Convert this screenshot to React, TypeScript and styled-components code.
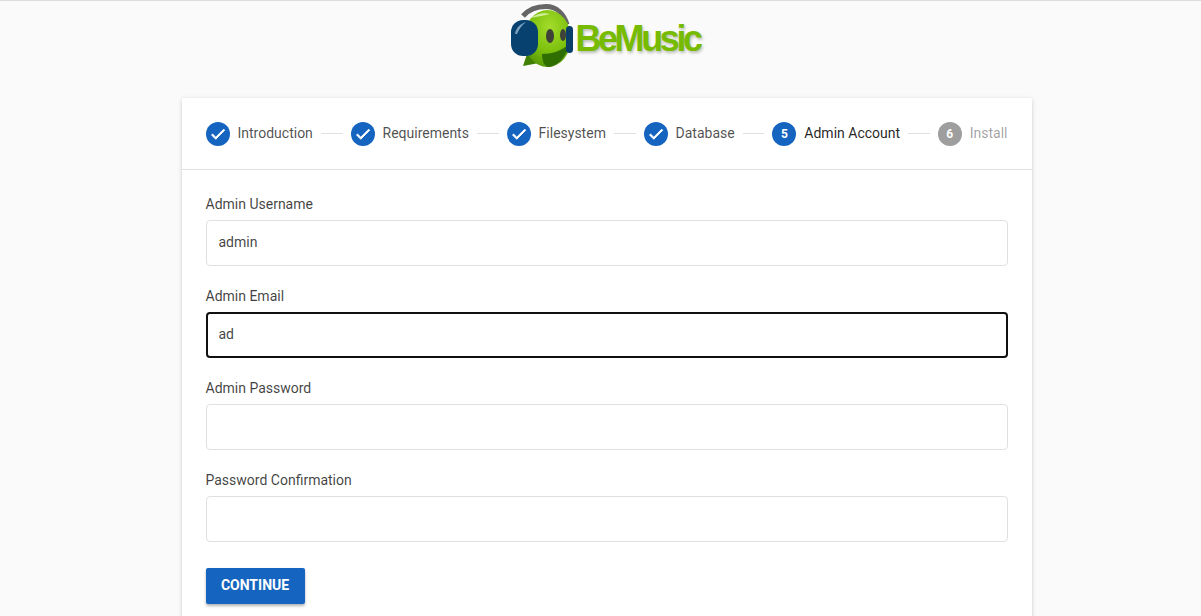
import React from "react";
import styled, { createGlobalStyle } from "styled-components";

const Global = createGlobalStyle`
  html, body { margin: 0; padding: 0; height: 100%; overflow: hidden; background: #fafafa; }
  body { font-family: Roboto, "Liberation Sans", sans-serif; color: rgba(0,0,0,.87); }
  * { box-sizing: border-box; }
`;

const Page = styled.div`
  border-top: 1px solid #dcdcdc;
  padding-left: 12px;
  display: flex;
  flex-direction: column;
  align-items: center;
`;

const LogoRow = styled.div`
  height: 97px;
  width: 100%;
  display: flex;
  justify-content: center;
  padding: 3px 4px 0 0;
`;

const LogoLink = styled.div`
  display: flex;
  align-items: flex-start;
  height: 68px;
`;

const LogoText = styled.span`
  font-family: "Liberation Sans", Arial, sans-serif;
  font-weight: 700;
  font-size: 36px;
  letter-spacing: -3.4px;
  line-height: 68px;
  padding-top: 1px;
  margin-left: -4px;
  color: #76bb00;
  text-shadow: 1px 2px 3px rgba(70, 80, 50, .35);
`;

const Card = styled.main`
  width: 850px;
  background: #fff;
  border-radius: 2px;
  box-shadow: 0 1px 5px rgba(0,0,0,.14), 0 2px 3px rgba(0,0,0,.06);
`;

const Stepper = styled.div`
  height: 72px;
  padding: 0 24px;
  display: flex;
  align-items: center;
  border-bottom: 1px solid #e0e0e0;
`;

const Step = styled.div`
  display: flex;
  align-items: center;
  gap: 8px;
  flex: none;
`;

const Bubble = styled.span<{ $active: boolean }>`
  width: 24px;
  height: 24px;
  border-radius: 50%;
  background: ${(p) => (p.$active ? "#1565c0" : "#9e9e9e")};
  color: #fff;
  font-size: 12px;
  font-weight: 700;
  display: flex;
  align-items: center;
  justify-content: center;
`;

const StepLabel = styled.span<{ $state: "done" | "current" | "todo" }>`
  font-size: 14px;
  line-height: 20px;
  padding-bottom: 2px;
  color: ${(p) =>
    p.$state === "current" ? "rgba(0,0,0,.87)" : p.$state === "done" ? "rgba(0,0,0,.7)" : "rgba(0,0,0,.38)"};
`;

const Connector = styled.span`
  flex: 1 1 0;
  height: 1px;
  margin: 0 8px;
  background: #e0e0e0;
`;

const Form = styled.form`
  padding: 24px;
`;

const Field = styled.div`
  margin-bottom: 20px;
`;

const Label = styled.label`
  display: block;
  font-size: 14px;
  line-height: 20px;
  margin-bottom: 6px;
  color: rgba(0,0,0,.75);
`;

const Input = styled.input<{ $focused?: boolean }>`
  display: block;
  width: 100%;
  height: 46px;
  padding: 0 ${(p) => (p.$focused ? "11px" : "12px")} 2px;
  border-radius: 4px;
  background: #fff;
  font-family: Roboto, "Liberation Sans", sans-serif;
  font-size: 14px;
  color: rgba(0,0,0,.75);
  outline: none;
  border: ${(p) => (p.$focused ? "2px solid #101010" : "1px solid #e0e0e0")};
`;

const Continue = styled.button`
  display: block;
  margin-top: 26px;
  width: 99px;
  height: 36px;
  padding: 0 0 2px;
  border: none;
  border-radius: 2px;
  background: #1565c0;
  color: #fff;
  font-family: Roboto, "Liberation Sans", sans-serif;
  font-size: 14px;
  font-weight: 700;
  text-transform: uppercase;
  box-shadow: 0 2px 3px rgba(0,0,0,.3);
`;

const Logo = () => (
  <svg width="70" height="68" viewBox="0 0 70 68" aria-hidden>
    <defs>
      <radialGradient id="head" cx="0.55" cy="0.3" r="0.8">
        <stop offset="0" stopColor="#a4dc2a" />
        <stop offset="0.55" stopColor="#7cc00e" />
        <stop offset="1" stopColor="#4a8c04" />
      </radialGradient>
    </defs>
    <path d="M14 12C20 5 28 2.500 37 2.500c11 0 18 8 21 18" fill="none" stroke="#666" strokeWidth="5" />
    <path d="M18 50 L14 62 L30 59Z" fill="#3f8004" />
    <ellipse cx="38.500" cy="34.500" rx="23.500" ry="28.500" fill="url(#head)" />
    <path d="M33 50c9 0 20-3 27-10-2 12-11 22-20 23-5 0-7-7-7-13z" fill="#2f6e00" />
    <ellipse cx="41" cy="32" rx="4" ry="7" fill="#3f4238" />
    <ellipse cx="54" cy="31" rx="3" ry="6" fill="#3f4238" />
    <path d="M22 14c5-4 13-6 19-4-5 1-13 3-19 4z" fill="#e0f4b0" opacity=".85" />
    <rect x="57" y="22" width="7" height="27" rx="3.500" fill="#0a3e69" />
    <rect x="2" y="16" width="27" height="36" rx="12" fill="#07416f" />
    <path d="M6 30c1-6 5-10 11-12-4 3-7 7-9 12z" fill="#8fb4d0" opacity=".85" />
  </svg>
);

const Check = () => (
  <svg width="18" height="18" viewBox="0 0 24 24" aria-hidden>
    <path d="M9 16.200 4.800 12l-1.400 1.400L9 19 21 7l-1.400-1.400z" fill="#fff" stroke="#fff" strokeWidth="1.200" />
  </svg>
);

const steps = ["Introduction", "Requirements", "Filesystem", "Database", "Admin Account", "Install"];
const fields: { label: string; value: string; focused?: boolean }[] = [
  { label: "Admin Username", value: "admin" },
  { label: "Admin Email", value: "ad", focused: true },
  { label: "Admin Password", value: "" },
  { label: "Password Confirmation", value: "" },
];

export default function App() {
  return (
    <Page>
      <Global />
      <LogoRow>
        <LogoLink>
          <Logo />
          <LogoText>BeMusic</LogoText>
        </LogoLink>
      </LogoRow>
      <Card>
        <Stepper>
          {steps.map((s, i) => (
            <React.Fragment key={s}>
              {i > 0 && <Connector />}
              <Step>
                <Bubble $active={i < 5}>{i < 4 ? <Check /> : i + 1}</Bubble>
                <StepLabel $state={i < 4 ? "done" : i === 4 ? "current" : "todo"}>{s}</StepLabel>
              </Step>
            </React.Fragment>
          ))}
        </Stepper>
        <Form>
          {fields.map((f) => (
            <Field key={f.label}>
              <Label>{f.label}</Label>
              <Input readOnly value={f.value} $focused={f.focused} />
            </Field>
          ))}
          <Continue type="button">Continue</Continue>
        </Form>
      </Card>
    </Page>
  );
}
